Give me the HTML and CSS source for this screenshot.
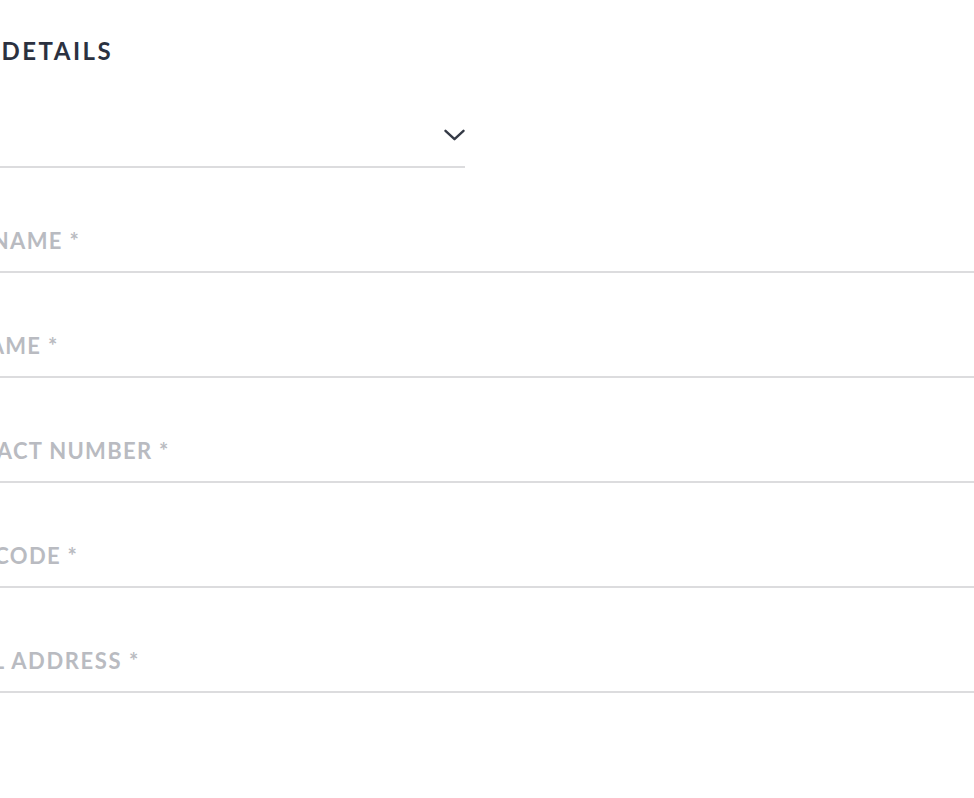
FILE: index.html
```html
<!DOCTYPE html>
<html lang="en">
<head>
<meta charset="utf-8">
<title>Personal details</title>
<link rel="stylesheet" href="styles.css">
</head>
<body>
<main class="page">
  <form class="form">
    <h2 class="heading">YOUR DETAILS</h2>
    <div class="select">
      <svg class="chevron" width="21" height="12" viewBox="0 0 21 12" aria-hidden="true">
        <path d="M1.5 1.8 L10.5 10.2 L19.5 1.8" fill="none" stroke="#353a46" stroke-width="2.4" stroke-linecap="round" stroke-linejoin="round"/>
      </svg>
    </div>
    <div class="field"><span class="label label--first">FIRST NAME *</span></div>
    <div class="field"><span class="label label--surname">SURNAME *</span></div>
    <div class="field"><span class="label label--contact">CONTACT NUMBER *</span></div>
    <div class="field"><span class="label label--postcode">POSTCODE *</span></div>
    <div class="field"><span class="label label--email">EMAIL ADDRESS *</span></div>
  </form>
</main>
</body>
</html>
```
FILE: styles.css
```css
html, body {
  margin: 0;
  padding: 0;
  background: #ffffff;
  overflow: hidden;
}

.page {
  width: 974px;
  height: 798px;
  overflow: hidden;
}

.form {
  display: flex;
  flex-direction: column;
  margin-left: -80px;
  width: 1080px;
  padding-top: 36px;
  font-family: Lato, "Open Sans", sans-serif;
  font-weight: 700;
}

.heading {
  margin: 0 0 0 -4px;
  height: 30px;
  line-height: 30px;
  font-size: 24px;
  letter-spacing: 2.5px;
  color: #2b3140;
  font-weight: 700;
  white-space: nowrap;
}

.select {
  width: 545px;
  height: 100px;
  display: flex;
  align-items: flex-end;
  justify-content: flex-end;
  border-bottom: 2px solid #dcdcde;
}

.chevron {
  margin-bottom: 25px;
}

.field {
  height: 103px;
  display: flex;
  align-items: flex-end;
  border-bottom: 2px solid #dcdcde;
}

.label {
  font-size: 22px;
  line-height: 26px;
  letter-spacing: 1.3px;
  color: #b9bbc1;
  padding-bottom: 17px;
  white-space: nowrap;
}

.label--first {
  margin-left: 1px;
}

.label--surname {
  margin-left: 4px;
}

.label--contact {
  margin-left: 11px;
}

.label--postcode {
  margin-left: 13px;
}

.label--email {
  margin-left: 11px;
  letter-spacing: 1.6px;
}
```
